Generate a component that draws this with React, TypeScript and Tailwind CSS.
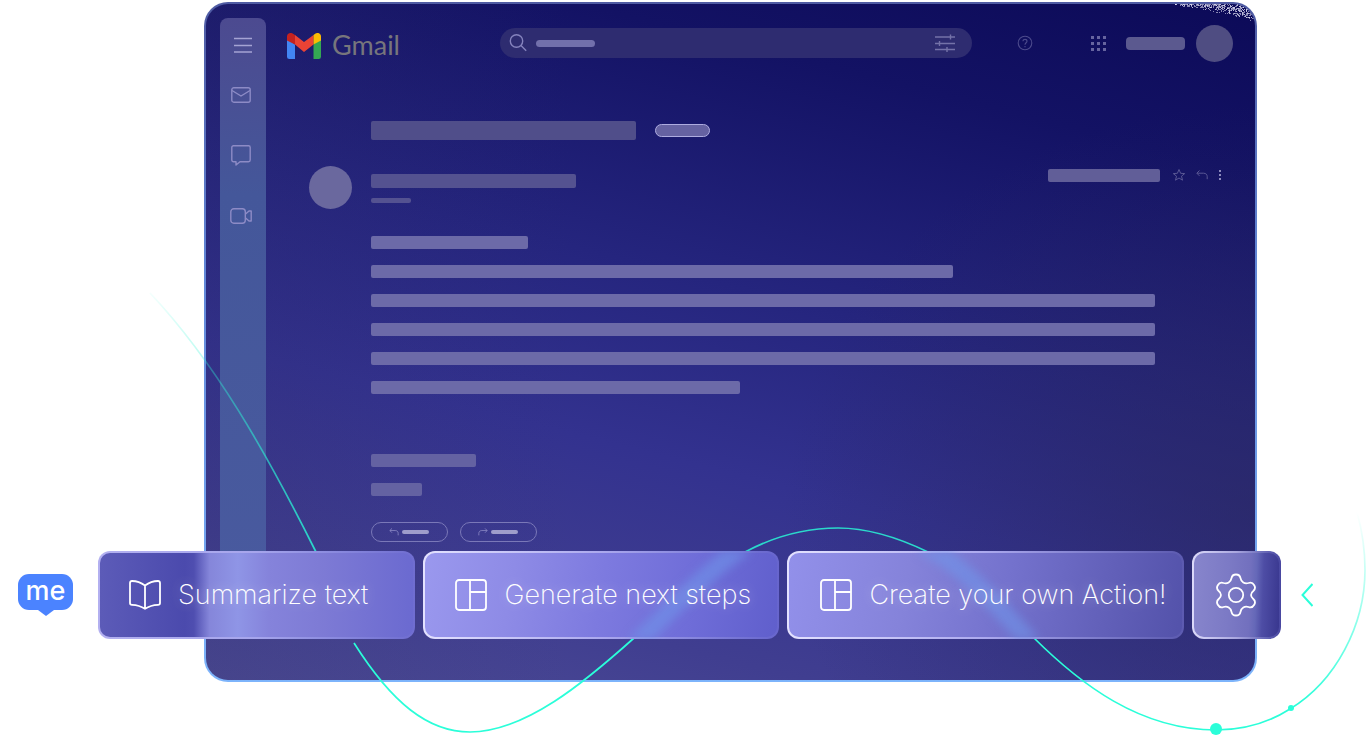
import type { ReactNode } from 'react';
import clsx from 'clsx';

const bodyLines = ['w-[157px]', 'w-[582px]', 'w-[784px]', 'w-[784px]', 'w-[784px]', 'w-[369px]'];

function Bar({ className }: { className: string }) {
  return <div className={clsx('max-w-full rounded-xs', className)} />;
}

function GmailLogo() {
  return (
    <svg viewBox="0 0 34 26" className="h-[26px] w-[34px] shrink-0" aria-hidden="true">
      <path d="M0 5.5 8 11.500V26H2.300A2.300 2.300 0 0 1 0 23.700Z" fill="#4285f4" />
      <path d="M34 5.500 26.500 11.500V26h5.200a2.300 2.300 0 0 0 2.300-2.300Z" fill="#34a853" />
      <path d="M8 2 17 9l9.500-7v9.500L17 19 8 11.500Z" fill="#ea4335" />
      <path d="M0 5.500V3.500C0 .3 3.500-1 6 .700L8 2v9.500L0 7.500Z" fill="#c5221f" />
      <path d="M26.500 2 28.500.600C31-1 34 .400 34 3.500v4l-7.500 4Z" fill="#fbbc04" />
    </svg>
  );
}

function Sidebar() {
  const item = 'flex h-[22px] w-[22px] items-center justify-center';
  return (
    <nav className="mt-[14px] ml-[14px] flex h-[590px] w-[46px] shrink-0 flex-col items-center rounded-t-lg bg-linear-to-b from-[#4c4a90] via-[#44579a] via-30% to-[#495a9f] pt-4 pr-[5px] text-[#8d8bc6]">
      <button aria-label="Menu" className={clsx(item, 'ml-1 text-[#a5a3d4]')}>
        <svg viewBox="0 0 18 16" className="h-4 w-[18px]" stroke="currentColor" strokeWidth="1.500">
          <path d="M0 1.500h18M0 8.500h18M0 15h18" />
        </svg>
      </button>
      <button aria-label="Mail" className={clsx(item, 'mt-7')}>
        <svg viewBox="0 0 20 16" className="h-4 w-5" fill="none" stroke="currentColor" strokeWidth="1.400">
          <rect x=".8" y=".8" width="18.400" height="14.400" rx="2" />
          <path d="m1 3.500 9 5.500 9-5.500" />
        </svg>
      </button>
      <button aria-label="Chat" className={clsx(item, 'mt-[38px]')}>
        <svg viewBox="0 0 20 21" className="h-[21px] w-5" fill="none" stroke="currentColor" strokeWidth="1.400" strokeLinejoin="round">
          <path d="M2.500.8h15a1.700 1.700 0 0 1 1.700 1.700v12.500a1.700 1.700 0 0 1-1.700 1.700H9L5 20v-3.300H2.500A1.700 1.700 0 0 1 .8 15V2.500A1.700 1.700 0 0 1 2.500.8Z" />
        </svg>
      </button>
      <button aria-label="Meet" className={clsx(item, 'mt-[39px]')}>
        <svg viewBox="0 0 22 16" className="h-4 w-[22px]" fill="none" stroke="currentColor" strokeWidth="1.400" strokeLinejoin="round">
          <rect x=".8" y=".8" width="14.500" height="14.400" rx="3" />
          <path d="m15.300 6.200 3.700-3.200h2.200v10H19l-3.700-3.200" />
        </svg>
      </button>
    </nav>
  );
}

function Header() {
  return (
    <header className="flex items-center pt-[19px] pr-[22px] pl-[21px]">
      <div className="flex h-10 w-[213px] items-center gap-[11px] pt-[5px]">
        <GmailLogo />
        <span className="pb-[2px] font-['Lato','Liberation_Sans',sans-serif] text-[27px] leading-8 text-[#77767c]">Gmail</span>
      </div>
      <div className="flex h-[30px] max-w-[472px] flex-1 items-center rounded-full bg-[#2e2c70] pr-[17px] pl-[9px] text-[#8583bd]">
        <svg viewBox="0 0 18 18" className="h-[18px] w-[18px] shrink-0" fill="none" stroke="currentColor" strokeWidth="1.400">
          <circle cx="7.500" cy="7" r="6.200" />
          <path d="m12 11.500 5.200 5.200" />
        </svg>
        <div className="ml-[9px] h-[7px] w-[59px] rounded-sm bg-[#7270ab]" />
        <input aria-label="Search mail" className="min-w-0 flex-1 bg-transparent text-sm outline-none" />
        <button aria-label="Search options" className="text-[#7472a8]">
          <svg viewBox="0 0 20 18" className="h-[18px] w-5" stroke="currentColor" strokeWidth="1.400">
            <path d="M0 3h20M0 9.500h20M0 15.500h20M15.500.500v5M4.500 7v5M12 13v5" />
          </svg>
        </button>
      </div>
      <div className="ml-auto flex items-center">
        <button aria-label="Help" className="text-[#4c4a8c]">
          <svg viewBox="0 0 16 16" className="h-4 w-4" fill="none" stroke="currentColor" strokeWidth="1.100">
            <circle cx="8" cy="8" r="6.800" />
            <path d="M6 6.200C6 3.700 10 3.700 10 6.200 10 7.600 8 8 8 9.700M8 11v1.200" />
          </svg>
        </button>
        <button aria-label="Apps" className="ml-[58px] grid grid-cols-3 gap-[3px]">
          {Array.from({ length: 9 }, (_, i) => (
            <span key={i} className="h-[3px] w-[3px] bg-[#66649f]" />
          ))}
        </button>
        <div className="ml-5 h-[13px] w-[59px] rounded-sm bg-[#5b598f]" />
        <div className="ml-[11px] h-[37px] w-[37px] rounded-full bg-[#4f4d82]" />
      </div>
    </header>
  );
}

function ReplyArrow({ className }: { className: string }) {
  return (
    <svg viewBox="0 0 12 10" className={className} fill="none" stroke="currentColor">
      <path d="M3.500.500.800 3.200l2.700 2.700M1 3.200h6.500c2.500 0 3.700 1.500 3.700 3.500v2.500" />
    </svg>
  );
}

function Message() {
  return (
    <article className="pt-[58px] pr-[34px] pl-[105px]">
      <div className="flex items-center gap-[19px]">
        <Bar className="h-[19px] w-[265px] bg-[#504e8a]" />
        <div className="h-[13px] w-[55px] rounded-full border border-[#aeace0] bg-[#6562a2]" />
      </div>
      <div className="-ml-[62px] flex pt-[26px]">
        <div className="h-[43px] w-[43px] shrink-0 rounded-full bg-[#6a689e]" />
        <div className="ml-[19px] pt-2">
          <Bar className="h-[14px] w-[205px] bg-[#545290]" />
          <Bar className="mt-[10px] h-[5px] w-10 bg-[#545291]" />
        </div>
        <div className="mt-[2px] ml-auto flex h-[14px] items-center text-[#5a5894]">
          <Bar className="h-[13px] w-[112px] bg-[#615e98]" />
          <button aria-label="Star" className="ml-3">
            <svg viewBox="0 0 14 14" className="h-[14px] w-[14px]" fill="none" stroke="currentColor" strokeLinejoin="round">
              <path d="m7 1.500 1.600 3.800 4.100.300-3.200 2.600 1 4L7 10l-3.500 2.200 1-4-3.200-2.600 4.100-.300Z" />
            </svg>
          </button>
          <button aria-label="Reply" className="ml-[10px]">
            <ReplyArrow className="h-[10px] w-3" />
          </button>
          <button aria-label="More" className="ml-[11px] grid gap-[2px]">
            <span className="h-[2px] w-[2px] bg-[#8c8abd]" />
            <span className="h-[2px] w-[2px] bg-[#8c8abd]" />
            <span className="h-[2px] w-[2px] bg-[#8c8abd]" />
          </button>
        </div>
      </div>
      <div className="flex flex-col gap-4 pt-[27px] pr-[35px]">
        {bodyLines.map((width, i) => (
          <Bar key={i} className={clsx('h-[13px] bg-[#6c6aa8]', width)} />
        ))}
      </div>
      <div className="flex flex-col gap-4 pt-[60px]">
        <Bar className="h-[13px] w-[105px] bg-[#6462a2]" />
        <Bar className="h-[13px] w-[51px] bg-[#6462a2]" />
      </div>
      <div className="flex gap-3 pt-[26px]">
        <button aria-label="Reply to message" className="flex h-5 w-[77px] items-center justify-center gap-[3px] rounded-full border border-[#7a78b8] pr-px text-[#8e8cc6]">
          <ReplyArrow className="h-2 w-[10px]" />
          <span className="h-1 w-[27px] rounded-xs bg-[#9f9dcb]" />
        </button>
        <button aria-label="Forward message" className="flex h-5 w-[77px] items-center justify-center gap-[3px] rounded-full border border-[#7a78b8] pr-px text-[#8e8cc6]">
          <ReplyArrow className="h-2 w-[10px] -scale-x-100" />
          <span className="h-1 w-[27px] rounded-xs bg-[#9f9dcb]" />
        </button>
      </div>
    </article>
  );
}

// Speckled highlight fading in towards the window's top right corner
function Grain() {
  let seed = 7;
  const random = () => {
    seed = (seed * 16807) % 2147483647;
    return seed / 2147483647;
  };
  const specks: { x: number; y: number }[] = [];
  for (let i = 0; i < 1800; i++) {
    const x = Math.floor(random() * 80);
    const y = Math.floor(random() * 20);
    const middle = (x * x) / 800;
    const spread = 1 + x / 8;
    if (Math.abs(y - middle) < spread * random()) specks.push({ x, y });
  }
  return (
    <svg viewBox="0 0 80 20" className="absolute top-0 right-0 h-5 w-20" fill="#dcdcf0" aria-hidden="true">
      {specks.map((s, i) => (
        <rect key={i} x={s.x} y={s.y} width="1" height="1" fillOpacity=".6" />
      ))}
    </svg>
  );
}

function Curve() {
  return (
    <svg
      viewBox="0 0 1367 737"
      preserveAspectRatio="none"
      className="pointer-events-none absolute inset-0 h-full w-full"
      fill="none"
      strokeWidth="1.700"
      aria-hidden="true"
    >
      <defs>
        <linearGradient id="curve-start" gradientUnits="userSpaceOnUse" x1="140" y1="280" x2="315" y2="551">
          <stop offset="0" stopColor="#2bfed9" stopOpacity="0" />
          <stop offset="1" stopColor="#2bd9cb" />
        </linearGradient>
        <linearGradient id="curve-end" gradientUnits="userSpaceOnUse" x1="1300" y1="700" x2="1357" y2="512">
          <stop offset="0" stopColor="#2bfed9" />
          <stop offset="1" stopColor="#2bfed9" stopOpacity="0" />
        </linearGradient>
      </defs>
      <path d="M150 293C215 362 266 452 316 552" stroke="url(#curve-start)" />
      <path d="M354 643C392 703 428 732 470 732C525 732 585 682 634 638" stroke="#2bfed9" />
      <path d="M745 552C775 536 805 528 838 528C868 528 897 537 928 552" stroke="#2bd9cb" />
      <path d="M1033 637C1080 684 1140 730 1216 730C1244 730 1268 723 1290 709" stroke="#2bfed9" />
      <path d="M1290 709C1336 681 1365 625 1365 570C1365 548 1362 530 1357 512" stroke="url(#curve-end)" />
      <circle cx="1216" cy="729" r="6" fill="#2bfed9" />
      <circle cx="1291" cy="708" r="3" fill="#2bfed9" />
    </svg>
  );
}

interface ActionProps {
  className: string;
  surface: string;
  icon: ReactNode;
  label: string;
  beam?: ReactNode;
}

function Action({ className, surface, icon, label, beam }: ActionProps) {
  return (
    <button
      className={clsx(
        'relative flex h-[88px] min-w-0 items-center overflow-hidden rounded-xl bg-linear-to-r p-[2px] text-white',
        className,
      )}
    >
      <span className={clsx('flex h-full w-full items-center rounded-[10px]', surface)}>
        {beam}
        <span className="relative flex items-center gap-[17px] whitespace-nowrap [text-shadow:0_0_12px_#ffffff60]">
          {icon}
          {label}
        </span>
      </span>
    </button>
  );
}

function Beam({ d, box }: { d: string; box: string }) {
  return (
    <svg viewBox={box} preserveAspectRatio="none" className="absolute inset-0 h-full w-full blur-[5px]" aria-hidden="true">
      <path d={d} fill="none" stroke="#6f95ea" strokeWidth="18" strokeOpacity=".6" />
    </svg>
  );
}

function BookIcon() {
  return (
    <svg viewBox="0 0 32 30" className="h-[30px] w-8 shrink-0" fill="none" stroke="currentColor" strokeWidth="1.800" strokeLinejoin="round">
      <path d="M16 5.500C12 2.500 8 1 3 1 1.800 1 1 1.700 1 3v20c0 1.300.700 1.800 2 1.800 5 .200 9 1.400 13 4 4-2.600 8-3.800 13-4 1.300 0 2-.500 2-1.800V3c0-1.300-.800-2-2-2-5 0-9 1.500-13 4.500ZM16 5.500V29" />
    </svg>
  );
}

function PanelsIcon() {
  return (
    <svg viewBox="0 0 32 32" className="h-8 w-8 shrink-0" fill="none" stroke="currentColor" strokeWidth="1.800">
      <rect x="1" y="1" width="30" height="30" rx="3" />
      <path d="M15 1v30M15 13h16" />
    </svg>
  );
}

function GearIcon() {
  return (
    <svg viewBox="0 0 42 44" className="h-11 w-[42px]" fill="none" stroke="currentColor" strokeWidth="1.800" strokeLinejoin="round">
      <path d="M16.500 5.200C17 2.500 18 1.500 21 1.500s4 1 4.500 3.700c.600 3.800 4.200 6.200 8 4.800 2.500-1 4.300-.300 5.700 2.200 1.400 2.400 1.200 4-.900 5.800-3 2.400-3 5.600 0 8 2.100 1.800 2.300 3.400.900 5.800-1.400 2.500-3.200 3.200-5.700 2.200-3.800-1.400-7.400 1-8 4.800-.500 2.700-1.500 3.700-4.500 3.700s-4-1-4.500-3.700c-.600-3.800-4.200-6.200-8-4.800-2.500 1-4.300.300-5.700-2.200-1.400-2.400-1.200-4 .900-5.800 3-2.400 3-5.600 0-8-2.100-1.800-2.300-3.400-.900-5.800 1.400-2.500 3.200-3.200 5.700-2.200 3.800 1.400 7.400-1 8-4.800Z" />
      <circle cx="21" cy="22" r="7.200" />
    </svg>
  );
}

function ActionBar() {
  return (
    <div className="relative -mt-[131px] flex items-center pr-[54px] pl-[18px] font-['Inter','Liberation_Sans',sans-serif] text-[27px] leading-8 font-[250]">
      <a href="#" className="mr-[25px] flex w-[55px] shrink-0 flex-col items-center">
        <span className="flex h-9 w-full items-center justify-center rounded-[11px] bg-[#4b83ff] pb-[2px] text-[27px] leading-8 font-medium text-white">
          me
        </span>
        <svg viewBox="0 0 16 6" className="h-[6px] w-4" aria-hidden="true">
          <path d="M0 0h16L8 6Z" fill="#4b83ff" />
        </svg>
      </a>
      <div className="flex min-w-0 flex-1 gap-2">
        <Action
          className="flex-[317] from-[#b3b0f0] via-[#a6a5ec] to-[#6f6dd0]"
          surface="pl-[29px] bg-[linear-gradient(90deg,#5c5bb8_0%,#4b4aad_27%,#4f4eb0_30%,#8586da_35%,#8f95e6_44%,#8583db_54%,#7e7bd5_70%,#6b6ad0_100%)]"
          icon={<BookIcon />}
          label="Summarize text"
        />
        <Action
          className="flex-[356] from-[#e4e2ff] via-[#aba8ee] to-[#6765cd]"
          surface="bg-[linear-gradient(100deg,#9a98ee_0%,#8e8be6_25%,#7d7adf_50%,#6f6dd8_75%,#605fcc_100%)] pl-[30px]"
          icon={<PanelsIcon />}
          label="Generate next steps"
          beam={<Beam box="0 0 356 88" d="M212 94C245 62 275 28 322 -6" />}
        />
        <Action
          className="flex-[397] from-[#e4e2ff] via-[#aba8ee] to-[#5c5ab0]"
          surface="bg-[linear-gradient(100deg,#9290ea_0%,#8583da_30%,#7472cd_55%,#6260b9_80%,#5352aa_100%)] pl-[31px]"
          icon={<PanelsIcon />}
          label="Create your own Action!"
          beam={<Beam box="0 0 397 88" d="M136 -6C176 14 205 48 246 94" />}
        />
        <button
          aria-label="Settings"
          className="h-[88px] w-[89px] shrink-0 rounded-xl bg-linear-to-r from-[#dcdafa] via-[#a9a6df] to-[#4846a0] p-[2px] text-white"
        >
          <span className="flex h-full items-center justify-center rounded-[10px] bg-[linear-gradient(92deg,#8785cc_0%,#7c7ac5_40%,#7270be_65%,#6568b8_72%,#4e4da5_80%,#39378f_100%)]">
            <GearIcon />
          </span>
        </button>
      </div>
      <button aria-label="Collapse" className="ml-5 shrink-0 text-[#2bfed9]">
        <svg viewBox="0 0 12 24" className="h-6 w-3" fill="none" stroke="currentColor" strokeWidth="2">
          <path d="M11.500 1 1.500 12l10 11" />
        </svg>
      </button>
    </div>
  );
}

export default function App() {
  return (
    <main className="relative overflow-hidden bg-white pt-[2px] pb-[98px]">
      <div className="mr-[110px] ml-[204px] rounded-3xl bg-linear-to-b from-[#4f5ba3] via-[#6288d8] via-40% to-[#7db4fb] p-[2px]">
        <div className="relative flex h-[676px] overflow-hidden rounded-[22px] bg-[linear-gradient(to_right,#2c286030,#2c286000_35%),radial-gradient(ellipse_45%_60%_at_100%_75%,#2a285ea0,#2a285e00),linear-gradient(194deg,#0c0a58,#131264_18%,#25257e_44%,#33328f_64%,#403e90_84%,#4c4b95)]">
          <Sidebar />
          <div className="min-w-0 flex-1">
            <Header />
            <Message />
          </div>
          <Grain />
        </div>
      </div>
      <Curve />
      <ActionBar />
    </main>
  );
}
